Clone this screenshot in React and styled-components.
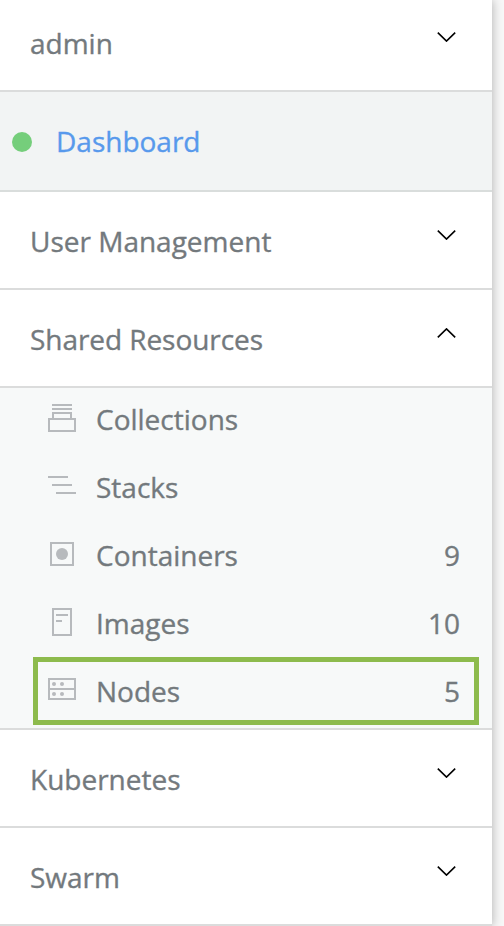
import React from "react";
import styled, { createGlobalStyle, css } from "styled-components";

const GlobalStyle = createGlobalStyle`
  *, *::before, *::after { box-sizing: border-box; }
  body {
    margin: 0;
    background: #f7f7f7;
    overflow: hidden;
    font-family: "Open Sans", sans-serif;
  }
`;

const Sidebar = styled.nav`
  width: 492px;
  height: 926px;
  background: #fff;
  box-shadow: 0 0 10px rgba(0, 0, 0, 0.3);
  color: #73797d;
  font-size: 28px;
  line-height: 38px;
  -webkit-text-stroke: 0.35px currentColor;
`;

const SectionRow = styled.div`
  display: flex;
  align-items: center;
  justify-content: space-between;
  padding: ${(p) => (p.$first ? 24 : 30)}px 36px 28px 30px;
  border-bottom: 2px solid #dbdcdc;
`;

const ActiveRow = styled.div`
  display: flex;
  align-items: center;
  gap: 24px;
  padding: 30px 12px;
  background: #f2f4f4;
  border-bottom: 2px solid #d9dddc;
  color: #5799ec;
`;

const StatusDot = styled.span`
  width: 20px;
  height: 20px;
  margin-top: 2px;
  border-radius: 50%;
  background: #75ce7b;
`;

const Label = styled.span`
  white-space: nowrap;
  letter-spacing: ${(p) => p.$tracking || 0}px;
`;

const ChevronIcon = styled.svg`
  width: 19px;
  height: 10px;
  margin-bottom: 12px;
  fill: none;
  stroke: #000;
  stroke-width: 1.6;
`;

const ItemList = styled.ul`
  display: flex;
  flex-direction: column;
  gap: 30px;
  margin: 0;
  padding: 12px 32px 18px 46px;
  list-style: none;
  background: #f7f9f9;
  border-bottom: 2px solid #dbdcdc;
`;

const Item = styled.li`
  position: relative;
  display: flex;
  align-items: center;
  height: 38px;
  ${(p) =>
    p.$highlighted &&
    css`
      &::after {
        content: "";
        position: absolute;
        inset: -15px -19px -15px -13px;
        border: 5px solid #8dbb4d;
      }
    `}
`;

const ItemIcon = styled.svg`
  width: 32px;
  height: 32px;
  margin-right: 18px;
  flex: none;
  fill: none;
  stroke: #b7babd;
  stroke-width: 2;
  shape-rendering: geometricPrecision;
`;

const Count = styled.span`
  margin-left: auto;
`;

const Chevron = ({ up }) => (
  <ChevronIcon viewBox="0 0 19 10">
    <path d={up ? "M.8 9.3 9.5.9l8.7 8.4" : "M.8.7l8.7 8.4L18.2.7"} />
  </ChevronIcon>
);

const Section = ({ label, first, open, tracking }) => (
  <SectionRow $first={first}>
    <Label $tracking={tracking}>{label}</Label>
    <Chevron up={open} />
  </SectionRow>
);

const icons = {
  collections: (
    <path d="M6 2h20M6 6h20M7 16v-6h18v6M3 16h26v12H3z" />
  ),
  stacks: <path d="M2 6h20M6 14h20M10 22h20" />,
  containers: (
    <>
      <path d="M5 4h22v22H5z" />
      <circle cx="16" cy="15" r="6" fill="#b7babd" stroke="none" />
    </>
  ),
  images: <path d="M7 2h18v26H7zM10 8h12M10 14h6" />,
  nodes: (
    <>
      <path d="M3 4h26v20H3zM3 14h26" />
      <g fill="#b7babd" stroke="none">
        <circle cx="8" cy="9" r="2" />
        <circle cx="16" cy="9" r="2" />
        <circle cx="8" cy="19" r="2" />
        <circle cx="16" cy="19" r="2" />
      </g>
    </>
  ),
};

const resources = [
  { icon: "collections", label: "Collections" },
  { icon: "stacks", label: "Stacks" },
  { icon: "containers", label: "Containers", count: 9 },
  { icon: "images", label: "Images", count: 10 },
  { icon: "nodes", label: "Nodes", count: 5, highlighted: true },
];

export default function App() {
  return (
    <>
      <GlobalStyle />
      <Sidebar>
        <Section label="admin" first />
        <ActiveRow>
          <StatusDot />
          <Label>Dashboard</Label>
        </ActiveRow>
        <Section label="User Management" />
        <Section label="Shared Resources" open tracking={-0.06} />
        <ItemList>
          {resources.map((r) => (
            <Item key={r.label} $highlighted={r.highlighted}>
              <ItemIcon viewBox="0 0 32 32">{icons[r.icon]}</ItemIcon>
              <Label>{r.label}</Label>
              {r.count != null && <Count>{r.count}</Count>}
            </Item>
          ))}
        </ItemList>
        <Section label="Kubernetes" />
        <Section label="Swarm" />
      </Sidebar>
    </>
  );
}
